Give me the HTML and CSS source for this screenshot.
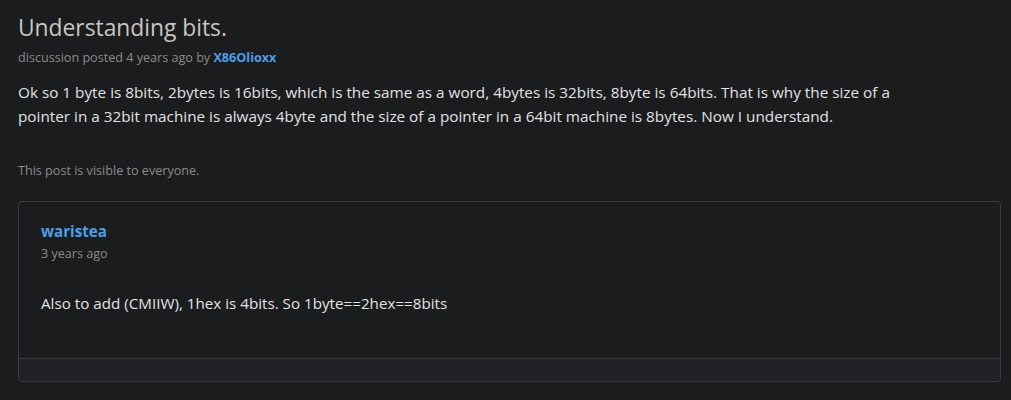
FILE: index.html
```html
<!DOCTYPE html>
<html>
<head>
<meta charset="utf-8">
<link rel="stylesheet" href="styles.css">
</head>
<body>
<div class="page">
  <h1 class="title">Understanding bits.</h1>
  <div class="meta">discussion posted 4 years ago by <a class="user" href="#">X86Olioxx</a></div>
  <p class="body">Ok so 1 byte is 8bits, 2bytes is 16bits, which is the same as a word, 4bytes is 32bits, 8byte is 64bits. That is why the size of a pointer in a 32bit machine is always 4byte and the size of a pointer in a 64bit machine is 8bytes. Now I understand.</p>
  <div class="visibility">This post is visible to everyone.</div>
  <div class="card">
    <div class="card-main">
      <a class="author" href="#">waristea</a>
      <div class="when">3 years ago</div>
      <p class="comment">Also to add (CMIIW), 1hex is 4bits. So 1byte==2hex==8bits</p>
    </div>
    <div class="card-foot"></div>
  </div>
</div>
</body>
</html>
```

FILE: styles.css
```css
html, body {
  margin: 0;
  padding: 0;
  background: #1b1c1e;
  font-family: "Open Sans", "Noto Sans", sans-serif;
}
.page {
  padding: 12px 10px 0 18px;
}
.title {
  margin: 0;
  font-size: 22.8px;
  line-height: 32px;
  font-weight: 400;
  color: #c9c6c0;
}
.meta {
  font-size: 12.6px;
  line-height: 18px;
  color: #8b8b8b;
  margin-top: 5px;
}
.user {
  color: #4b9fe8;
  font-weight: 700;
  text-decoration: none;
}
.body {
  margin: 13px 0 0;
  max-width: 900px;
  font-size: 15.3px;
  line-height: 24px;
  color: #e2e2e2;
}
.visibility {
  margin-top: 35px;
  font-size: 12.6px;
  line-height: 16px;
  color: #8b8b8b;
}
.card {
  margin-top: 22px;
  border: 1px solid #3b3c3f;
  border-radius: 4px;
  overflow: hidden;
}
.card-main {
  padding: 18px 22px 0;
  height: 156px;
  box-sizing: border-box;
}
.author {
  display: block;
  font-size: 15.2px;
  line-height: 22px;
  font-weight: 700;
  color: #4b9fe8;
  text-decoration: none;
}
.when {
  font-size: 12.6px;
  line-height: 22px;
  margin-top: 1px;
  color: #8b8b8b;
}
.comment {
  margin: 28px 0 0;
  font-size: 15.2px;
  line-height: 20px;
  color: #e2e2e2;
}
.card-foot {
  height: 22px;
  border-top: 1px solid #3b3c3f;
  background: #202124;
}
```
